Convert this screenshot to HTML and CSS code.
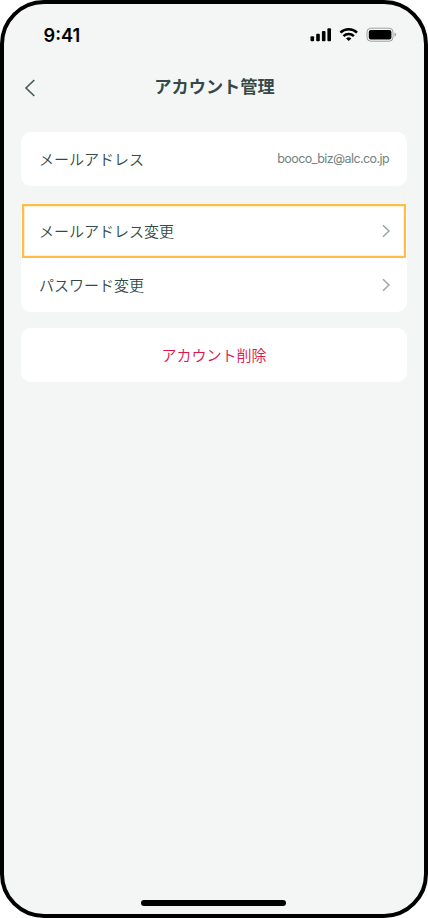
FILE: index.html
```html
<!DOCTYPE html>
<html lang="ja">
<head>
<meta charset="utf-8">
<meta name="viewport" content="width=device-width, initial-scale=1">
<title>アカウント管理</title>
<link rel="stylesheet" href="styles.css">
</head>
<body>
<div class="phone">
  <div class="status">
    <span class="time">9:41</span>
    <svg class="status-icons" width="88" height="16" viewBox="0 0 88 16">
      <rect x="0.5" y="9.3" width="3.6" height="5" rx="1"/>
      <rect x="6.2" y="6.8" width="3.6" height="7.5" rx="1"/>
      <rect x="11.9" y="4" width="3.6" height="10.3" rx="1"/>
      <rect x="17.4" y="1.2" width="3.6" height="13.1" rx="1"/>
      <g fill="none" stroke="#000" stroke-width="2.5">
        <path d="M30.4 5.7a12 12 0 0 1 16.6 0"/>
        <path d="M33.5 9.2a7.5 7.5 0 0 1 10.4 0"/>
      </g>
      <path d="M38.7 14.1l-2.7-2.7a4 4 0 0 1 5.4 0z"/>
      <rect x="57" y="1.2" width="26" height="13" rx="3.8" fill="none" stroke="#000" stroke-opacity=".35"/>
      <rect x="58.8" y="3" width="22.6" height="9.4" rx="2"/>
      <path d="M84.6 5.6v4.2a2.3 2.3 0 0 0 0-4.2z" fill-opacity=".4"/>
    </svg>
  </div>
  <header class="header">
    <svg class="back" width="12" height="18" viewBox="0 0 12 18"><path d="M10.3 1L2 9l8.3 8"/></svg>
    <h1 class="title">アカウント管理</h1>
  </header>
  <main class="content">
    <section class="card">
      <div class="row"><span>メールアドレス</span><span class="email">booco_biz@alc.co.jp</span></div>
    </section>
    <section class="card menu">
      <div class="row selected"><span>メールアドレス変更</span><svg class="chevron" width="8" height="14" viewBox="0 0 8 14"><path d="M1 1.3l6 5.7-6 5.7"/></svg></div>
      <div class="row"><span>パスワード変更</span><svg class="chevron" width="8" height="14" viewBox="0 0 8 14"><path d="M1 1.3l6 5.7-6 5.7"/></svg></div>
    </section>
    <section class="card">
      <div class="row delete"><span>アカウント削除</span></div>
    </section>
  </main>
  <div class="home"></div>
</div>
</body>
</html>
```
FILE: styles.css
```css
* { box-sizing: border-box; }
body { margin: 0; background: #fff; font-family: Inter, "Noto Sans CJK JP", sans-serif; color: #354a48; }
.phone { width: 428px; height: 918px; border: 4px solid #000; border-radius: 44px; background: #f4f6f6; display: flex; flex-direction: column; overflow: hidden; }
.status { height: 62px; padding: 0 26px 0 39.5px; display: flex; justify-content: space-between; align-items: center; color: #000; }
.time { font-size: 18.2px; line-height: 22px; font-weight: 600; }
.status-icons { display: block; }
.header { height: 66px; padding: 7px 19px 0 20px; display: grid; grid-template-columns: 12px 1fr 12px; align-items: start; }
.back { margin-top: 6px; fill: none; stroke: #4b5f5c; stroke-width: 1.7; }
.title { margin: 0; font-size: 17.2px; line-height: 26px; font-weight: 700; text-align: center; font-family: "Noto Sans CJK JP", sans-serif; }
.content { flex: 1; padding: 0 17px; display: flex; flex-direction: column; }
.card { background: #fff; border-radius: 10px; }
.menu { margin: 18px 0 16px; }
.row { height: 54px; padding: 0 17px 0 18px; display: flex; align-items: center; justify-content: space-between; font-size: 15px; line-height: 22px; font-weight: 350; font-family: "Noto Sans CJK JP", sans-serif; }
.selected { margin: 0 1px; padding: 0 16px 0 17px; box-shadow: inset 0 0 0 2px #ffbd45, inset 0 0 0 3px #fff0d2; }
.email { margin-right: 1px; font-family: Inter, sans-serif; font-size: 12.5px; font-weight: 400; letter-spacing: -0.58px; color: #74827f; }
.chevron { fill: none; stroke: #9ba5a3; stroke-width: 1.5; }
.delete { justify-content: center; padding: 0 18px; color: #dc1449; }
.home { width: 145px; height: 6px; margin: 0 0 8px 137px; border-radius: 3px; background: #000; }
```
